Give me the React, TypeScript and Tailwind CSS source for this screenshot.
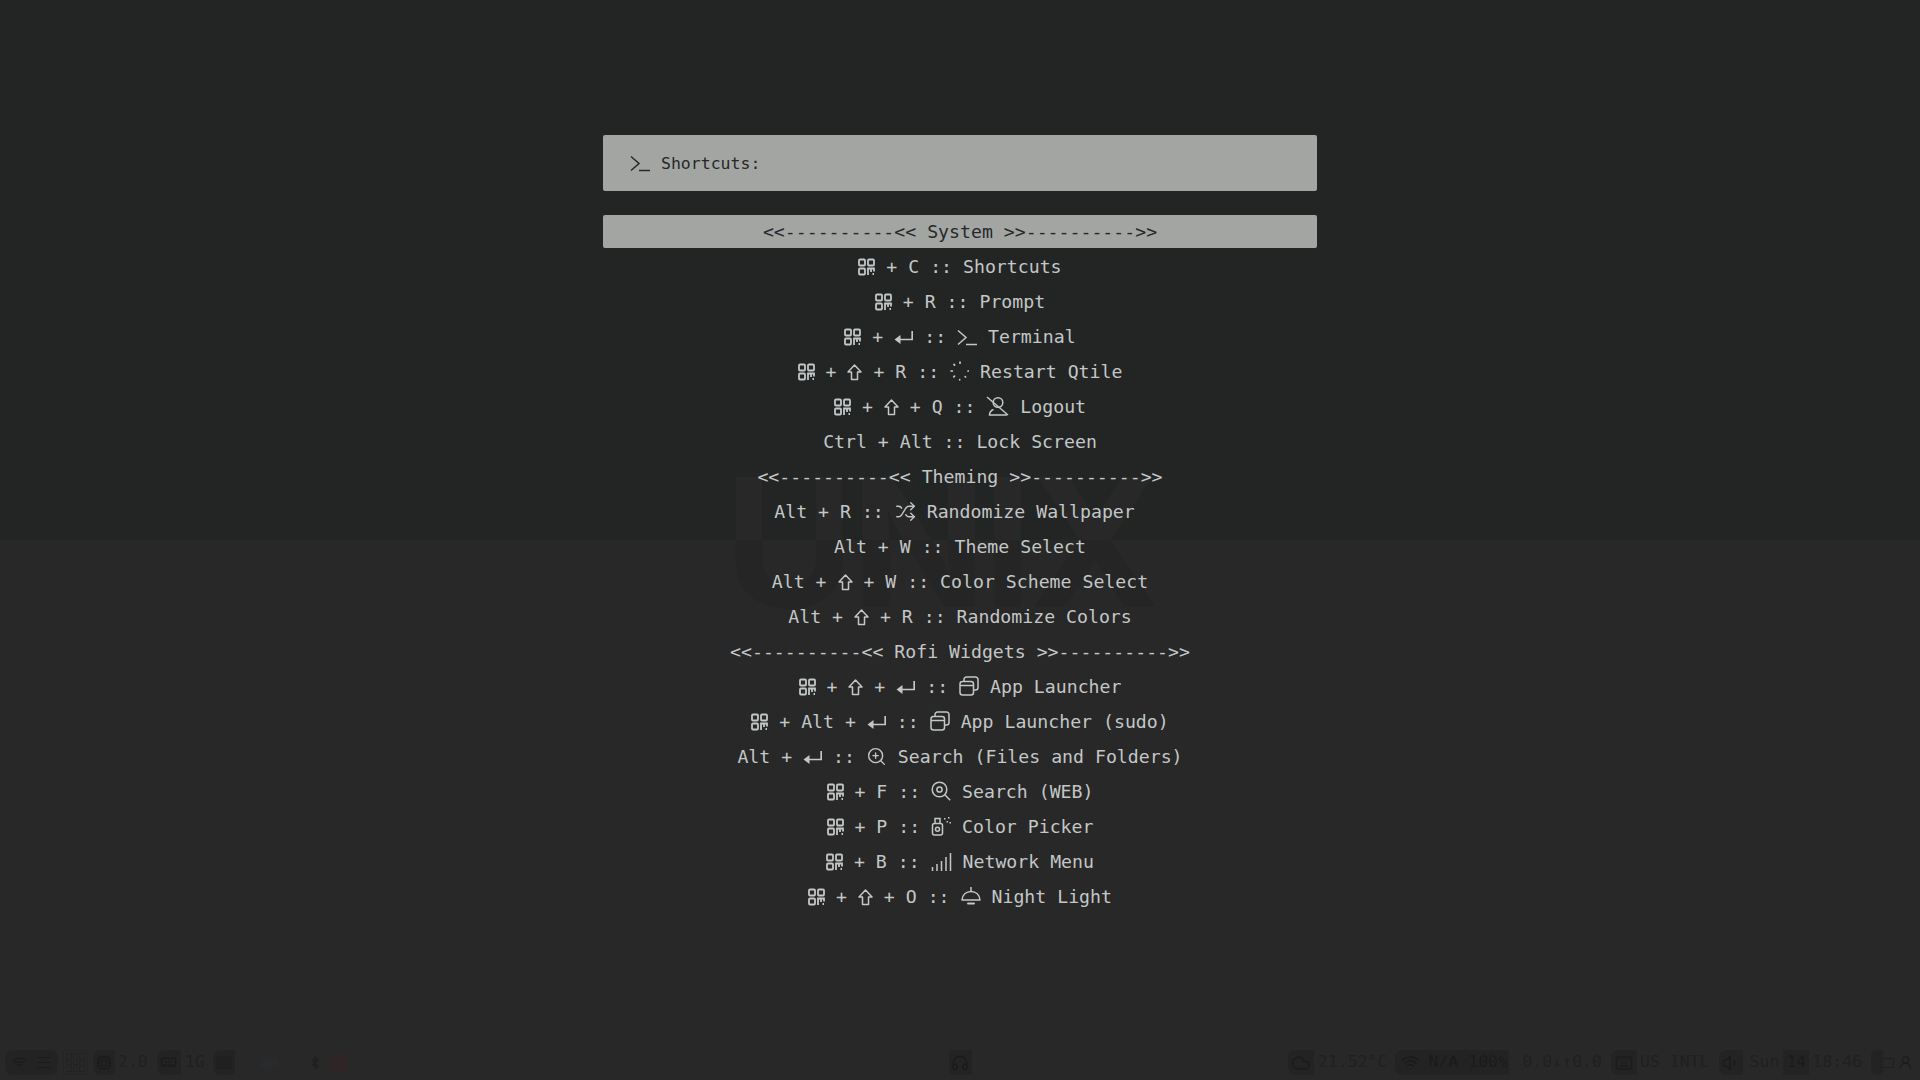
import type { ReactNode } from "react";
import { Bluetooth, Cloud, Cpu, Headphones, Keyboard, MemoryStick, Shuffle, UserRound, Volume1, Wifi, ZoomIn } from "lucide-react";

function Glyph({ w, h, children }: { w: number; h: number; children: ReactNode }) {
  return (
    <svg
      width={w}
      height={h}
      viewBox={`0 0 ${w} ${h}`}
      fill="none"
      stroke="currentColor"
      strokeWidth="1.5"
      className="inline-block align-[-3px]"
    >
      {children}
    </svg>
  );
}

const Super = () => (
  <Glyph w={17} h={18}>
    <g strokeWidth="1.8">
      <rect x="1" y="1.500" width="6" height="6" rx="1" />
      <rect x="10" y="1.500" width="6" height="6" rx="1" />
      <rect x="1" y="10.500" width="6" height="6" rx="1" />
      <path d="M10 17v-6.500h6v3M13 11v3" />
    </g>
    <path d="M14.500 15h1.500v2h-1.500z" fill="currentColor" stroke="none" />
  </Glyph>
);

const Enter = () => (
  <Glyph w={19} h={16}>
    <path d="M18.200 1v8.500H5" strokeWidth="1.700" />
    <path d="M6.500 5v9L.5 9.500z" fill="currentColor" stroke="none" />
  </Glyph>
);

const Prompt = () => (
  <Glyph w={20} h={17}>
    <path d="M1 1.500 9 8.500 1 15.500" />
    <path d="M9 15.500H20" />
  </Glyph>
);

const ShiftKey = () => (
  <Glyph w={15} h={17}>
    <path d="M7.500 1 14 8h-3.500v7.500h-6V8H1z" strokeLinejoin="round" />
  </Glyph>
);

const Spinner = () => (
  <Glyph w={19} h={20}>
    <g strokeWidth="1.700" strokeLinecap="round">
      <path d="M10 1v1.200M4 3.400l.6.700M1 10h1.400M3.800 15.800l.7-.7M9.700 18.700v.1M15.600 16l-.4-.4M18 10h.4" />
    </g>
  </Glyph>
);

const UserOff = () => (
  <Glyph w={23} h={20}>
    <path d="M1 1 22 19" />
    <circle cx="12" cy="6.500" r="4.800" />
    <path d="M7.500 13.500C5 14.500 3.500 16.500 3.500 19H21" />
  </Glyph>
);

const Stack = () => (
  <Glyph w={20} h={20}>
    <rect x="1" y="5.500" width="13.500" height="13.500" rx="2.500" />
    <path d="M1 9.500h13.500" />
    <path d="M5 5.500V3.500A2.500 2.500 0 0 1 7.500 1h9A2.500 2.500 0 0 1 19 3.500v8a2.500 2.500 0 0 1-2.500 2.500h-2" />
  </Glyph>
);

const SearchTarget = () => (
  <Glyph w={20} h={20}>
    <circle cx="8.500" cy="8.500" r="7.300" />
    <circle cx="8.500" cy="8.500" r="2.600" />
    <path d="M13.800 13.800 19.200 19.200" />
  </Glyph>
);

const Picker = () => (
  <Glyph w={20} h={20}>
    <rect x="1.500" y="7.500" width="10" height="11.500" rx="2" />
    <path d="M4 7.500V2.500h5v5" />
    <circle cx="6.500" cy="13.300" r="2" />
    <path d="M13 2h1.500v1.500H13zM17 1h1.500v1.500H17zM15.500 5H17v1.500h-1.500zM18.500 6H20v1.500h-1.500z" fill="currentColor" stroke="none" />
  </Glyph>
);

const Signal = () => (
  <Glyph w={21} h={19}>
    <path d="M1.500 15v4M6 12v7M10.500 9v10M15 5v14M19.500 1v18" />
  </Glyph>
);

const Lamp = () => (
  <Glyph w={20} h={19}>
    <path d="M10 0v4" />
    <path d="M1 13c.5-5 4-8.500 9-8.500s8.500 3.500 9 8.500z" strokeLinejoin="round" />
    <path d="M7 16.500h6" strokeWidth="2" strokeLinecap="round" />
  </Glyph>
);

const ShuffleIcon = () => <Shuffle size={21} strokeWidth={1.6} className="inline-block align-[-4px]" />;
const SearchPlus = () => <ZoomIn size={21} strokeWidth={1.6} className="inline-block align-[-4px]" />;

type Token = string | ReactNode;

const S = <Super />;
const E = <Enter />;
const H = <ShiftKey />;

const rows: Token[][] = [
  [S, " + C :: Shortcuts"],
  [S, " + R :: Prompt"],
  [S, " + ", E, " :: ", <Prompt />, " Terminal"],
  [S, " + ", H, " + R :: ", <Spinner />, " Restart Qtile"],
  [S, " + ", H, " + Q :: ", <UserOff />, " Logout"],
  ["Ctrl + Alt :: Lock Screen"],
  ["<<----------<< Theming >>---------->>"],
  ["Alt + R :: ", <ShuffleIcon />, " Randomize Wallpaper "],
  ["Alt + W :: Theme Select"],
  ["Alt + ", H, " + W :: Color Scheme Select"],
  ["Alt + ", H, " + R :: Randomize Colors"],
  ["<<----------<< Rofi Widgets >>---------->>"],
  [S, " + ", H, " + ", E, " :: ", <Stack />, " App Launcher"],
  [S, " + Alt + ", E, " :: ", <Stack />, " App Launcher (sudo)"],
  ["Alt + ", E, " :: ", <SearchPlus />, " Search (Files and Folders)"],
  [S, " + F :: ", <SearchTarget />, " Search (WEB)"],
  [S, " + P :: ", <Picker />, " Color Picker"],
  [S, " + B :: ", <Signal />, " Network Menu"],
  [S, " + ", H, " + O :: ", <Lamp />, " Night Light"],
];

function Row({ tokens }: { tokens: Token[] }) {
  return (
    <div className="flex h-[33px] items-center justify-center">
      <span>
        {tokens.map((t, i) => (
          <span key={i}>{t}</span>
        ))}
      </span>
    </div>
  );
}

function BarBox({ children, className }: { children: ReactNode; className?: string }) {
  return (
    <div className={`flex h-[25px] items-center justify-center bg-[#232323] text-[#1b1b1b] ${className ?? ""}`}>
      {children}
    </div>
  );
}

function StatusBar() {
  return (
    <div className="relative mb-[5px] mt-auto grid h-[25px] grid-cols-[1fr_auto_1fr] text-[16.5px] text-[#202020]">
      <div className="flex items-center pl-[5px]">
        <BarBox className="w-[53px] gap-[10px] rounded-[8px]">
          <Wifi size={15} />
          <span className="flex w-[14px] flex-col gap-[4px]">
            <span className="h-px bg-[#1b1b1b]" />
            <span className="h-px bg-[#1b1b1b]" />
            <span className="h-px bg-[#1b1b1b]" />
          </span>
        </BarBox>
        <div className="ml-[5px] grid h-[25px] w-[25px] grid-cols-3 grid-rows-3 gap-px border border-[#242424] p-[2px]">
          {Array.from({ length: 9 }).map((_, i) => (
            <span key={i} className="border border-[#222222]" />
          ))}
        </div>
        <BarBox className="ml-[5px] w-[22px] rounded-l-[8px]">
          <Cpu size={16} />
        </BarBox>
        <span className="ml-[3px]">2.0</span>
        <BarBox className="ml-[9px] w-[24px] rounded-l-[8px]">
          <MemoryStick size={17} />
        </BarBox>
        <span className="ml-[4px]">1G</span>
        <BarBox className="ml-[8px] w-[22px] rounded-l-[8px]">
          <span className="h-[13px] w-[16px] rounded-[2px] border border-[#1e1e1e] bg-[#202020]" />
        </BarBox>
        <div className="ml-[25px] h-[11px] w-[19px] rounded-[2px] bg-[#282a2c]" />
        <Bluetooth size={14} className="ml-[29px] text-[#1e1e1e]" />
        <div className="ml-[6px] h-[20px] w-[20px] rounded-full bg-[#2f2426]" />
      </div>

      <BarBox className="w-[23px] rounded-l-[6px]">
        <Headphones size={18} />
      </BarBox>

      <div className="flex items-center justify-end pr-[7px]">
        <BarBox className="w-[26px] rounded-l-[8px]">
          <Cloud size={20} />
        </BarBox>
        <span className="ml-[4px]">21.52°C</span>
        <BarBox className="ml-[8px] w-[114px] justify-start gap-2 rounded-l-[8px] pl-[6px]">
          <Wifi size={19} />
          <span>N/A 100%</span>
        </BarBox>
        <span className="ml-[13px]">0.0↓↑0.0</span>
        <BarBox className="ml-[9px] w-[26px] rounded-l-[8px]">
          <Keyboard size={18} />
        </BarBox>
        <span className="ml-[3px]">US INTL</span>
        <BarBox className="ml-[9px] w-[24px] rounded-l-[8px]">
          <Volume1 size={18} />
        </BarBox>
        <span className="ml-[7px]">Sun</span>
        <BarBox className="ml-[4px] w-[26px]">14</BarBox>
        <span className="ml-[3px]">18:46</span>
        <BarBox className="ml-[9px] w-[12px] rounded-l-[6px]">
          <span />
        </BarBox>
        <span className="h-[10px] w-[11px] border border-l-0 border-[#1e1e1e]" />
        <UserRound size={15} className="ml-[4px] text-[#1c1c1c]" />
      </div>
    </div>
  );
}

export default function App() {
  return (
    <div className="relative flex h-screen w-full flex-col overflow-hidden bg-[linear-gradient(#232525_50%,#282828_50%)] font-['DejaVu_Sans_Mono',monospace] text-[18.2px] text-[#c3c7c7] whitespace-pre">
      <div className="pointer-events-none absolute left-[724px] top-[433px] bg-[linear-gradient(#282828_107px,#252525_107px)] bg-clip-text font-['Inter',sans-serif] text-[178px] font-bold leading-[220px] tracking-[-0.02em] text-transparent">
        UNIX
      </div>

      <div className="relative mx-auto mt-[135px] flex w-[714px] flex-col">
        <div className="flex h-[56px] items-center gap-[11px] rounded-[2px] bg-[#a3a5a3] pl-[27px] text-[16.5px] text-[#262829]">
          <Prompt />
          <span className="relative top-px">Shortcuts:</span>
        </div>
        <div className="mt-[24px] flex flex-col gap-[2px]">
          <div className="flex h-[33px] items-center justify-center rounded-[2px] bg-[#a3a5a3] text-[#262829]">
            {"<<----------<< System >>---------->>"}
          </div>
          {rows.map((r, i) => (
            <Row key={i} tokens={r} />
          ))}
        </div>
      </div>

      <StatusBar />
    </div>
  );
}
